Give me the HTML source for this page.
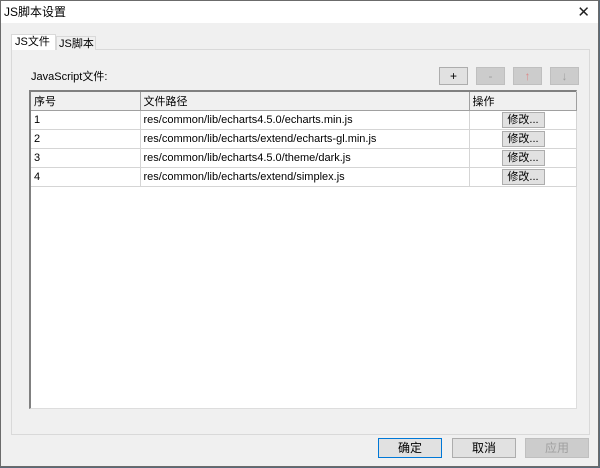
<!DOCTYPE html><html><head><style>
*{box-sizing:border-box;margin:0;padding:0}
body{width:600px;height:468px;background:#5a6a78;position:relative;overflow:hidden;font-family:"Liberation Sans","Noto Sans CJK SC",sans-serif;font-size:12px;color:#000}
.win{position:absolute;left:0;top:0;width:599px;height:467px;background:#f0f0f0;border:1px solid #6b6b6b}
.title{position:absolute;left:0;top:0;width:100%;height:22px;background:#fff;font-size:12px;line-height:22px;padding-left:3px}
.x{position:absolute;right:8px;top:1px;font-size:15px;color:#222;font-weight:lighter}
.a{position:absolute}
.tab{position:absolute;border:1px solid #d9d9d9;border-bottom:none;background:#f0f0f0;font-size:11px;line-height:14px;padding:0 2px;white-space:nowrap;overflow:hidden}
.panel{position:absolute;left:10px;top:48px;width:579px;height:386px;border:1px solid #d9d9d9;background:#f0f0f0}
.btn{position:absolute;height:18px;border:1px solid #adadad;background:#e1e1e1;text-align:center;font-size:12px;line-height:16px}
.dis{border-color:#bfbfbf;background:#ccc;color:#a0a0a0}
table{border-collapse:collapse;table-layout:fixed}
.tb{position:absolute;left:28px;top:89px;width:548px;height:319px;background:#fff;border-left:2px solid #808080;border-top:2px solid #808080;border-right:1px solid #ddd;border-bottom:1px solid #ddd}
td{height:19px;border-right:1px solid #d5d5d5;border-bottom:1px solid #d5d5d5;padding-left:3px;font-size:11px;white-space:nowrap}
th{height:18px;font-weight:normal;text-align:left;padding-left:3px;border-right:1px solid #a0a0a0;border-bottom:1px solid #a0a0a0;background:#f0f0f0;font-size:11px}
.m{display:inline-block;width:43px;height:16px;border:1px solid #adadad;background:#e1e1e1;text-align:center;line-height:14px;margin-left:29px;font-size:11px}
</style></head><body><div class="win">
<div class="title">JS脚本设置<span class="x">✕</span></div>
<div class="panel"></div>
<div class="tab" style="left:10px;top:33px;width:45px;height:16px;background:#fff;z-index:2;padding-left:3px">JS文件</div>
<div class="tab" style="left:55px;top:35px;width:40px;height:14px">JS脚本</div>
<div class="a" style="left:30px;top:67px;font-size:11px">JavaScript文件:</div>
<div class="btn" style="left:438px;top:66px;width:29px">+</div>
<div class="btn dis" style="left:475px;top:66px;width:29px">-</div>
<div class="btn dis" style="left:512px;top:66px;width:29px;color:#d88">↑</div>
<div class="btn dis" style="left:549px;top:66px;width:29px">↓</div>
<div class="tb"><table style="width:545px">
<colgroup><col style="width:109px"><col style="width:329px"><col style="width:107px"></colgroup>
<tr><th>序号</th><th>文件路径</th><th>操作</th></tr>
<tr><td>1</td><td>res/common/lib/echarts4.5.0/echarts.min.js</td><td><span class="m">修改...</span></td></tr>
<tr><td>2</td><td>res/common/lib/echarts/extend/echarts-gl.min.js</td><td><span class="m">修改...</span></td></tr>
<tr><td>3</td><td>res/common/lib/echarts4.5.0/theme/dark.js</td><td><span class="m">修改...</span></td></tr>
<tr><td>4</td><td>res/common/lib/echarts/extend/simplex.js</td><td><span class="m">修改...</span></td></tr>
</table></div>
<div class="btn" style="left:377px;top:437px;width:64px;height:20px;line-height:18px;border:1px solid #0078d7">确定</div>
<div class="btn" style="left:451px;top:437px;width:64px;height:20px;line-height:18px">取消</div>
<div class="btn dis" style="left:524px;top:437px;width:64px;height:20px;line-height:18px">应用</div>
</div></body></html>
